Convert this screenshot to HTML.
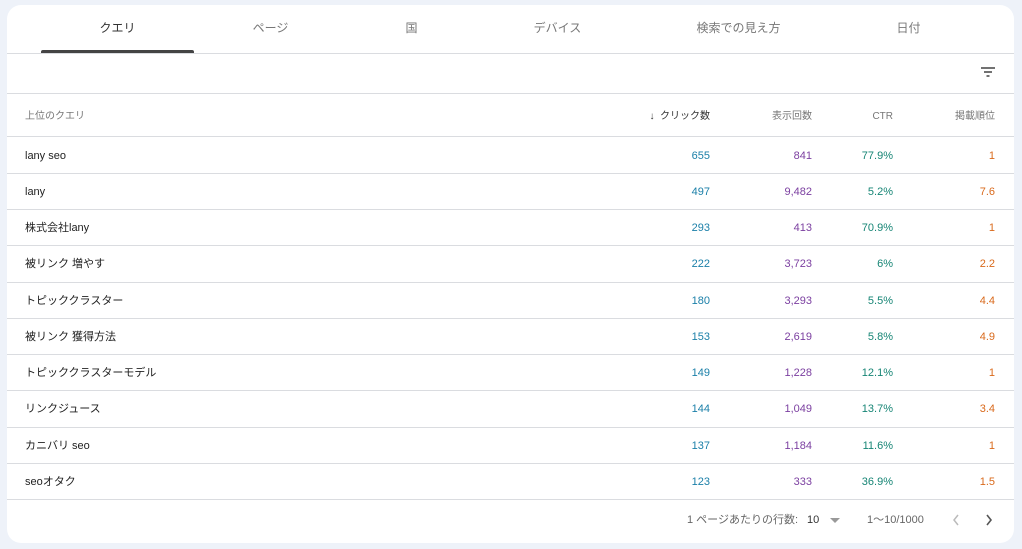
<!DOCTYPE html>
<html><head><meta charset="utf-8"><style>
*{margin:0;padding:0;box-sizing:border-box}
body{width:1022px;height:549px;background:#eef2f9;font-family:"Liberation Sans","Noto Sans CJK JP",sans-serif;position:relative;overflow:hidden}
.card{position:absolute;left:7px;top:5px;width:1007px;height:538px;background:#fff;border-radius:14px;overflow:hidden}
.tabs{position:absolute;left:0;top:0;width:100%;height:49px;border-bottom:1px solid #dadce0}
.tab{position:absolute;top:0;height:48px;line-height:46px;font-size:12px;color:#777;text-align:center}
.tab.a{color:#333}
.ind{position:absolute;left:34px;top:45px;width:153px;height:3px;background:#444;border-radius:2px 2px 0 0}
.tool{position:absolute;left:0;top:49px;width:100%;height:40px;border-bottom:1px solid #dadce0}
.row{position:absolute;left:0;width:100%;border-bottom:1px solid #dadce0;font-size:11px;color:#222}
.row span{position:absolute;top:0}
.q{left:18px}
.c1{right:304px;color:#1a7fa8}
.c2{right:202px;color:#7b3fa0}
.c3{right:121px;color:#168575}
.c4{right:19px;color:#d9691b}
.hd{color:#777;font-size:10px}
.foot{position:absolute;top:509px;font-size:11px;color:#666;line-height:12px}
</style></head><body>
<div class="card">
<div class="tabs">
<div class="tab a" style="left:34px;width:153px">クエリ</div>
<div class="tab" style="left:187px;width:153px">ページ</div>
<div class="tab" style="left:328px;width:153px">国</div>
<div class="tab" style="left:474px;width:153px">デバイス</div>
<div class="tab" style="left:655px;width:153px">検索での見え方</div>
<div class="tab" style="left:825px;width:153px">日付</div>
<div class="ind"></div>
</div>
<div class="tool">
<svg style="position:absolute;left:973px;top:12px" width="16" height="12" viewBox="0 0 16 12"><path d="M1 2h14M4 6h8M6.5 10h3" stroke="#444" stroke-width="1.6"/></svg>
</div>
<div class="row hd" style="top:89px;height:43px;line-height:45px"><span class="q">上位のクエリ</span><span class="c1" style="color:#333">↓&nbsp; クリック数</span><span class="c2" style="color:#777">表示回数</span><span class="c3" style="color:#777">CTR</span><span class="c4" style="color:#777">掲載順位</span></div>
<div class="row" style="top:132px;height:37px;line-height:38px"><span class="q">lany seo</span><span class="c1">655</span><span class="c2">841</span><span class="c3">77.9%</span><span class="c4">1</span></div>
<div class="row" style="top:169px;height:36px;line-height:37px"><span class="q">lany</span><span class="c1">497</span><span class="c2">9,482</span><span class="c3">5.2%</span><span class="c4">7.6</span></div>
<div class="row" style="top:205px;height:36px;line-height:37px"><span class="q">株式会社lany</span><span class="c1">293</span><span class="c2">413</span><span class="c3">70.9%</span><span class="c4">1</span></div>
<div class="row" style="top:241px;height:37px;line-height:37px"><span class="q">被リンク 増やす</span><span class="c1">222</span><span class="c2">3,723</span><span class="c3">6%</span><span class="c4">2.2</span></div>
<div class="row" style="top:278px;height:36px;line-height:37px"><span class="q">トピッククラスター</span><span class="c1">180</span><span class="c2">3,293</span><span class="c3">5.5%</span><span class="c4">4.4</span></div>
<div class="row" style="top:314px;height:36px;line-height:37px"><span class="q">被リンク 獲得方法</span><span class="c1">153</span><span class="c2">2,619</span><span class="c3">5.8%</span><span class="c4">4.9</span></div>
<div class="row" style="top:350px;height:36px;line-height:37px"><span class="q">トピッククラスターモデル</span><span class="c1">149</span><span class="c2">1,228</span><span class="c3">12.1%</span><span class="c4">1</span></div>
<div class="row" style="top:386px;height:37px;line-height:37px"><span class="q">リンクジュース</span><span class="c1">144</span><span class="c2">1,049</span><span class="c3">13.7%</span><span class="c4">3.4</span></div>
<div class="row" style="top:423px;height:36px;line-height:37px"><span class="q">カニバリ seo</span><span class="c1">137</span><span class="c2">1,184</span><span class="c3">11.6%</span><span class="c4">1</span></div>
<div class="row" style="top:459px;height:36px;line-height:37px"><span class="q">seoオタク</span><span class="c1">123</span><span class="c2">333</span><span class="c3">36.9%</span><span class="c4">1.5</span></div>
<div class="foot" style="left:680px">1 ページあたりの行数:</div>
<div class="foot" style="left:800px;color:#333">10</div>
<svg style="position:absolute;left:823px;top:513px" width="10" height="6"><path d="M0 0h10L5 5z" fill="#999"/></svg>
<div class="foot" style="left:860px">1〜10/1000</div>
<svg style="position:absolute;left:945px;top:509px" width="8" height="12"><path d="M6 1L2 6l4 5" stroke="#bbb" stroke-width="1.5" fill="none"/></svg>
<svg style="position:absolute;left:978px;top:509px" width="8" height="12"><path d="M2 1l4 5-4 5" stroke="#555" stroke-width="1.6" fill="none"/></svg>
</div>
</body></html>
